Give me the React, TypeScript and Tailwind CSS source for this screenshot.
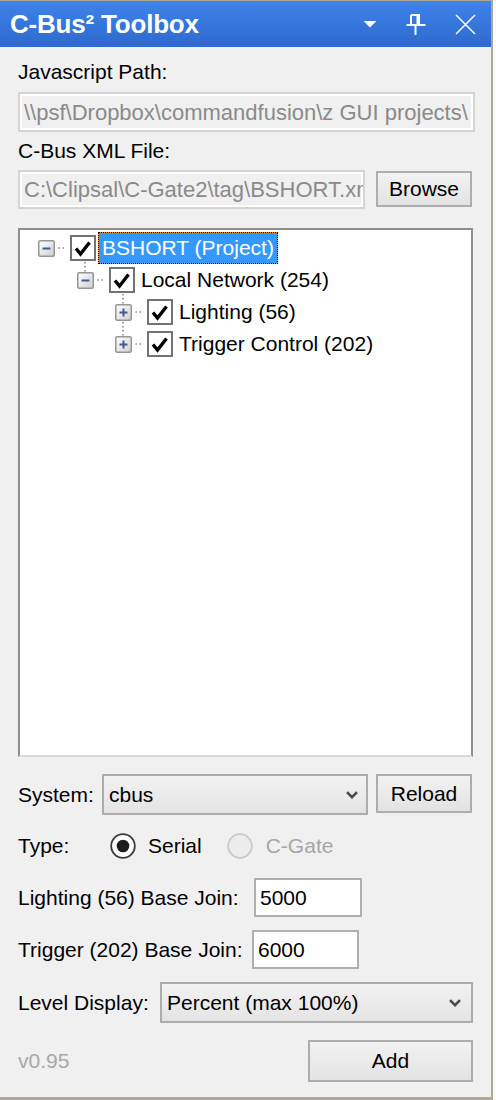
import React from 'react';

const font = "font-['Liberation_Sans',Arial,sans-serif]";

type Node = {
  label: string;
  indent: string;
  open: boolean;
  selected?: boolean;
};

const nodes: Node[] = [
  { label: 'BSHORT (Project)', indent: 'pl-[18px]', open: true, selected: true },
  { label: 'Local Network (254)', indent: 'pl-[57px]', open: true },
  { label: 'Lighting (56)', indent: 'pl-[95px]', open: false },
  { label: 'Trigger Control (202)', indent: 'pl-[95px]', open: false },
];

function Chevron() {
  return (
    <svg width="12" height="8" viewBox="0 0 12 8" className="shrink-0">
      <path d="M1 1.2 L6 6.2 L11 1.2" fill="none" stroke="#4a4a4a" strokeWidth="2.6" />
    </svg>
  );
}

function Expander({ open }: { open: boolean }) {
  return (
    <svg width="17" height="17" viewBox="0 0 17 17" className="shrink-0">
      <defs>
        <linearGradient id="expg" x1="0" y1="0" x2="1" y2="1">
          <stop offset="0" stopColor="#ffffff" />
          <stop offset="1" stopColor="#cfcfcf" />
        </linearGradient>
      </defs>
      <rect x="0.75" y="0.75" width="15.5" height="15.5" rx="1.5" fill="url(#expg)" stroke="#969696" strokeWidth="1.5" />
      <path d="M4.5 8.5 H12.5" stroke="#3f5a92" strokeWidth="2" />
      {!open && <path d="M8.5 4.5 V12.5" stroke="#3f5a92" strokeWidth="2" />}
    </svg>
  );
}

function CheckBox() {
  return (
    <svg width="26" height="26" viewBox="0 0 26 26" className="shrink-0">
      <rect x="1" y="1" width="24" height="24" fill="#fff" stroke="#737373" strokeWidth="2" />
      <path d="M6 13.5 L10.5 19 L19.5 7.5" fill="none" stroke="#000" strokeWidth="3.4" />
    </svg>
  );
}

function Dots() {
  return (
    <svg width="15" height="2" viewBox="0 0 15 2" className="shrink-0">
      <rect x="3.5" y="0.3" width="1.4" height="1.4" fill="#7a7a7a" />
      <rect x="7.5" y="0.3" width="1.4" height="1.4" fill="#7a7a7a" />
    </svg>
  );
}

function Radio({ checked, disabled }: { checked?: boolean; disabled?: boolean }) {
  return (
    <svg width="26" height="26" viewBox="0 0 26 26" className="shrink-0">
      <circle cx="13" cy="13" r="11.8" fill={disabled ? '#ececec' : '#fff'} stroke={disabled ? '#c9c9c9' : '#3a3a3a'} strokeWidth="1.8" />
      {checked && <circle cx="13" cy="13" r="6.3" fill="#1c1c1c" />}
    </svg>
  );
}

function Button({ children, className }: { children: React.ReactNode; className: string }) {
  return (
    <div className={`flex items-center justify-center border-2 border-[#adadad] bg-gradient-to-b from-[#f2f2f2] to-[#e3e3e3] text-black ${className}`}>
      {children}
    </div>
  );
}

function Select({ value, className }: { value: string; className: string }) {
  return (
    <div className={`flex items-center border-2 border-[#acacac] bg-gradient-to-b from-[#f2f2f2] to-[#e4e4e4] pl-[5px] pr-[8px] ${className}`}>
      <span className="flex-1 text-black">{value}</span>
      <Chevron />
    </div>
  );
}

export default function App() {
  return (
    <div className={`w-[496px] h-[1100px] bg-[#fbfbfb] ${font} text-[21px]`}>
      <div className="w-[493px] h-[1100px] border-t border-r-2 border-b-[3px] border-[#aca899] bg-[#f0f0f0] flex flex-col">
        {/* Title bar */}
        <div className="h-[46px] shrink-0 flex items-center pl-[10px] bg-gradient-to-b from-[#3d84ec] to-[#2f69cc] text-white">
          <span className="font-bold text-[26px] tracking-[-0.2px]">C-Bus² Toolbox</span>
          <div className="ml-auto flex items-center">
            <svg width="14" height="8" viewBox="0 0 14 8" className="mr-[29px]">
              <path d="M0.5 1 H13.5 L7 7.5 Z" fill="#fff" />
            </svg>
            <svg width="20" height="21" viewBox="0 0 20 21" className="mr-[29px]">
              <path d="M5 1 H13 V10 M5 1 V10" fill="none" stroke="#fff" strokeWidth="2" />
              <path d="M12 1 V10" stroke="#fff" strokeWidth="3" />
              <path d="M0.5 11 H19.5" stroke="#fff" strokeWidth="2" />
              <path d="M9.5 11 V21" stroke="#fff" strokeWidth="2" />
            </svg>
            <svg width="21" height="21" viewBox="0 0 21 21" className="mr-[15px]">
              <path d="M1 1 L20 20 M20 1 L1 20" stroke="#fff" strokeWidth="1.5" />
            </svg>
          </div>
        </div>

        {/* Body */}
        <div className="flex-1 flex flex-col px-[18px]">
          <div className="mt-[13px] h-[24px] leading-[24px] text-black">Javascript Path:</div>
          <div className="mt-[8px] h-[40px] w-[457px] flex items-center border-2 border-[#d4d4d4] shadow-[inset_0_0_0_2px_#fff] pl-[4px] overflow-hidden whitespace-nowrap text-[22px] text-[#8a8a8a]">
            {'\\\\psf\\Dropbox\\commandfusion\\z GUI projects\\'}
          </div>

          <div className="mt-[7px] h-[24px] leading-[24px] text-black">C-Bus XML File:</div>
          <div className="mt-[7px] h-[39px] flex">
            <div className="w-[347px] h-[39px] flex items-center border-2 border-[#d4d4d4] shadow-[inset_0_0_0_2px_#fff] pl-[4px] overflow-hidden whitespace-nowrap text-[22px] text-[#8a8a8a]">
              {'C:\\Clipsal\\C-Gate2\\tag\\BSHORT.xml'}
            </div>
            <Button className="ml-[11px] mt-[1px] w-[96px] h-[36px]">Browse</Button>
          </div>

          {/* Tree */}
          <div className="mt-[19px] h-[529px] w-[455px] border-2 border-[#8e8e8e] border-b-[#dadada] bg-white relative">
            <svg width="200" height="140" className="absolute left-0 top-0">
              <path d="M65 32 V42" stroke="#7a7a7a" strokeWidth="1.4" strokeDasharray="1.4 2.6" />
              <path d="M103 64 V74 M103 92 V106" stroke="#7a7a7a" strokeWidth="1.4" strokeDasharray="1.4 2.6" />
            </svg>
            <div className="pt-[2px] flex flex-col">
              {nodes.map((n) => (
                <div key={n.label} className={`relative h-[32px] flex items-center ${n.indent}`}>
                  <Expander open={n.open} />
                  <Dots />
                  <CheckBox />
                  {n.selected ? (
                    <span className="ml-[2px] h-[32px] bg-[#e8902c] flex">
                      <span className="border border-dotted border-black bg-[#3399ff] bg-clip-padding px-[3px] flex items-center text-white whitespace-nowrap">
                        {n.label}
                      </span>
                    </span>
                  ) : (
                    <span className="ml-[2px] h-[32px] border border-transparent px-[3px] flex items-center text-black whitespace-nowrap">
                      {n.label}
                    </span>
                  )}
                </div>
              ))}
            </div>
          </div>

          {/* System */}
          <div className="mt-[17px] h-[41px] flex items-center">
            <span className="w-[84px] text-black">System:</span>
            <Select value="cbus" className="w-[266px] h-[41px]" />
            <Button className="ml-[8px] self-start w-[96px] h-[39px]">Reload</Button>
          </div>

          {/* Type */}
          <div className="mt-[10px] h-[42px] flex items-center">
            <span className="w-[92px] text-black">Type:</span>
            <Radio checked />
            <span className="ml-[12px] text-black">Serial</span>
            <span className="ml-[25px] flex items-center">
              <Radio disabled />
            </span>
            <span className="ml-[13px] text-[#a6a6a6]">C-Gate</span>
          </div>

          {/* Base joins */}
          <div className="mt-[11px] h-[39px] flex items-center">
            <span className="w-[236px] text-black whitespace-nowrap">Lighting (56) Base Join:</span>
            <div className="w-[108px] h-[39px] flex items-center border-2 border-[#afafaf] bg-white pl-[4px] text-black">5000</div>
          </div>
          <div className="mt-[13px] h-[39px] flex items-center">
            <span className="w-[234px] text-black whitespace-nowrap">Trigger (202) Base Join:</span>
            <div className="w-[107px] h-[39px] flex items-center border-2 border-[#afafaf] bg-white pl-[4px] text-black">6000</div>
          </div>

          {/* Level display */}
          <div className="mt-[13px] h-[41px] flex items-center">
            <span className="w-[142px] text-black whitespace-nowrap">Level Display:</span>
            <Select value="Percent (max 100%)" className="w-[313px] h-[41px] pr-[10px]" />
          </div>

          {/* Footer */}
          <div className="mt-[17px] h-[42px] flex items-center">
            <span className="text-[#a8a8a8]">v0.95</span>
            <Button className="ml-auto w-[165px] h-[42px]">Add</Button>
          </div>
        </div>
      </div>
    </div>
  );
}
